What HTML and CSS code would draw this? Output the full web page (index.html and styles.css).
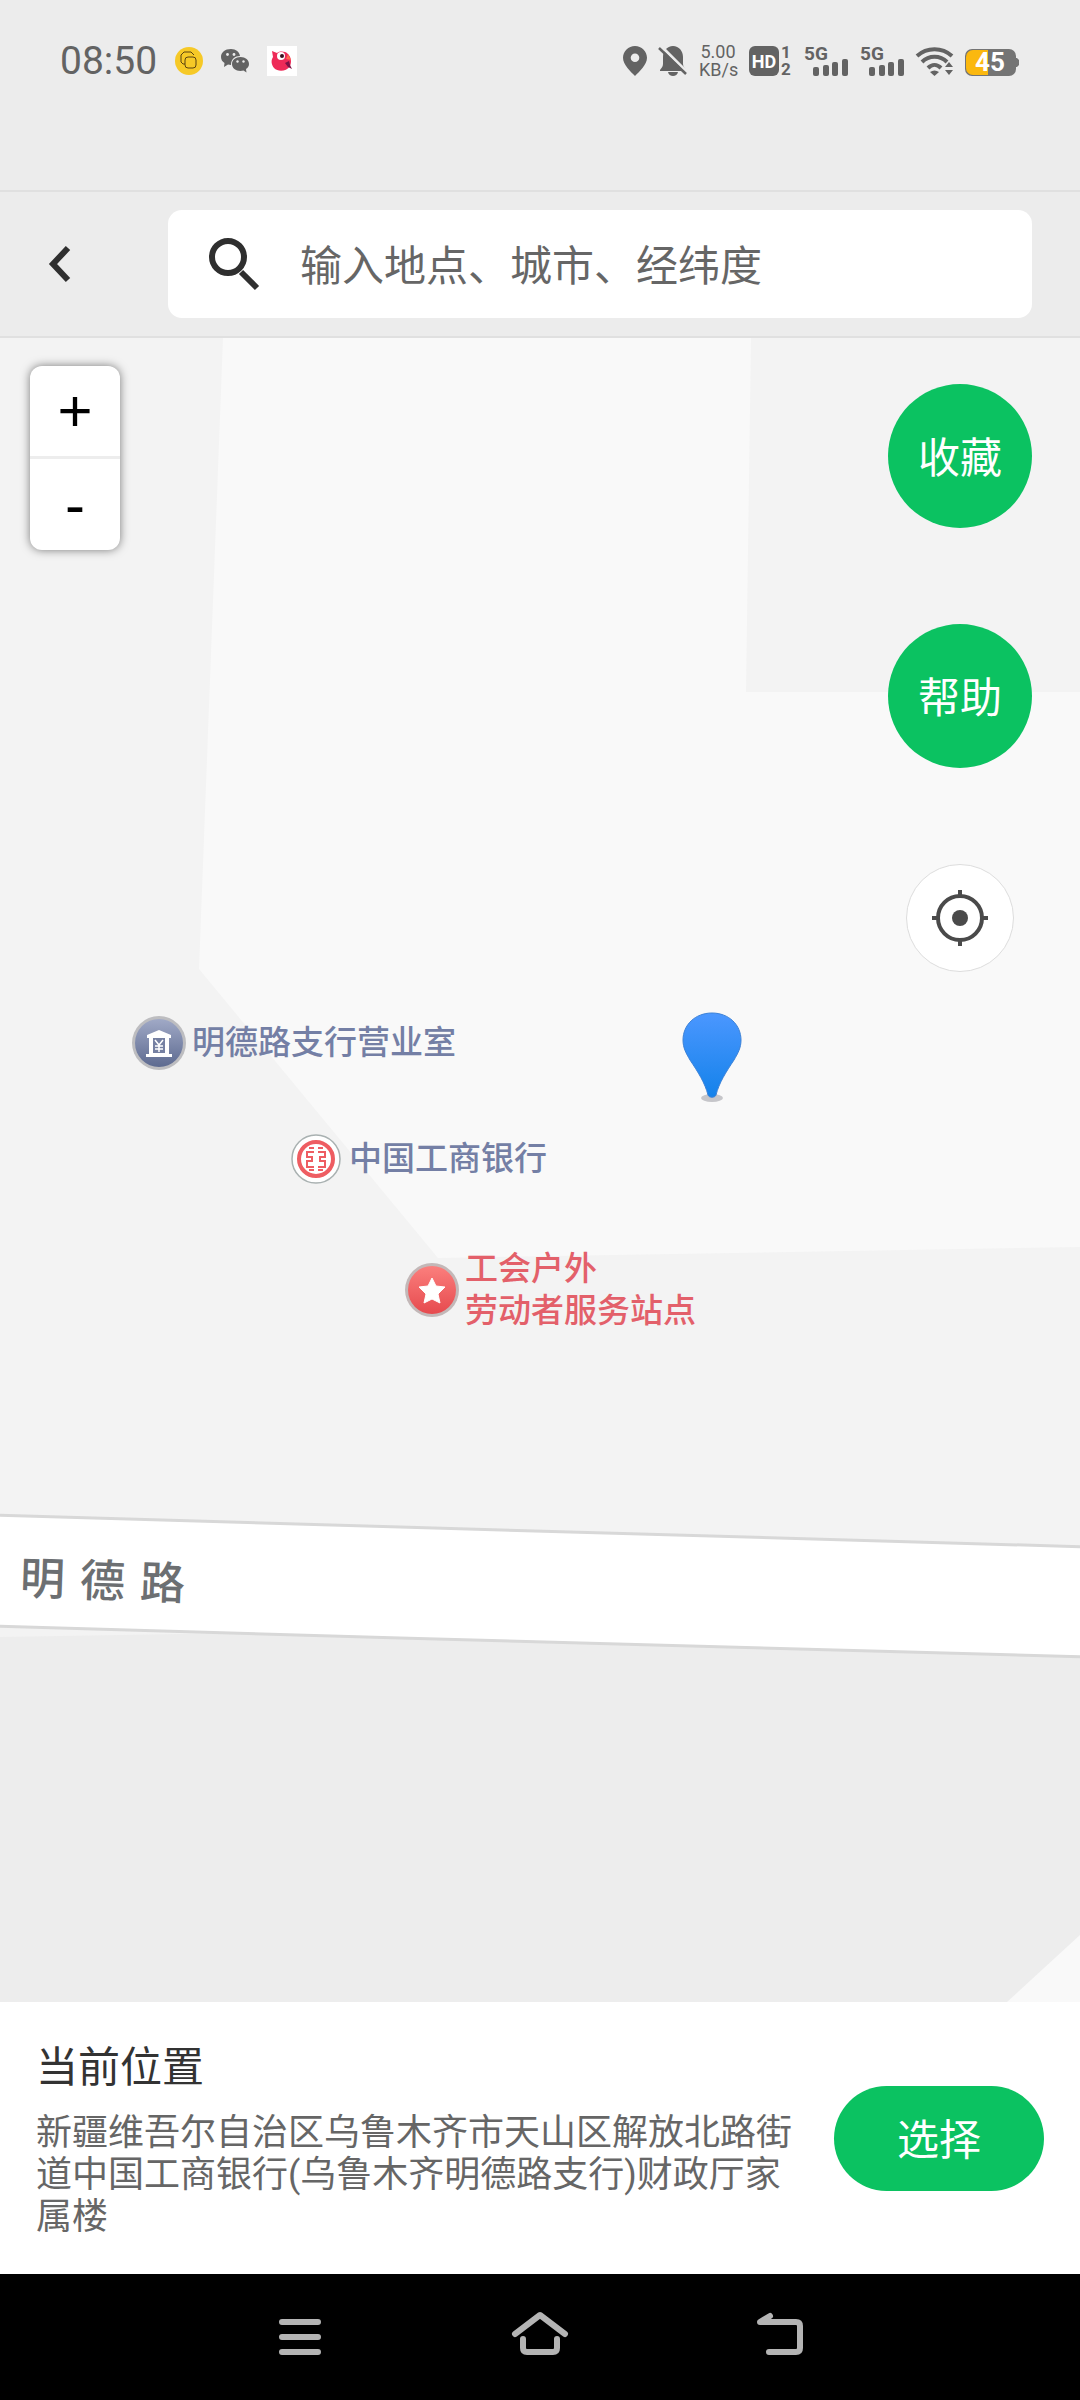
FILE: index.html
```html
<!DOCTYPE html>
<html lang="zh-CN">
<head>
    <meta charset="UTF-8">
    <meta name="viewport" content="width=device-width, initial-scale=1.0">
    <title>选择位置</title>
    <link rel="stylesheet" href="styles.css">
</head>
<body>
    <!-- Status bar -->
    <div class="status-bar">
        <div class="status-left">
            <span class="clock">08:50</span>
            <svg class="app-icon" width="28" height="30" viewBox="0 0 28 30">
                <circle cx="14" cy="15" r="14" fill="#f6c927"/>
                <g fill="none" stroke="#5a4210" stroke-width="1">
                    <path d="M10 18H8l-2-2V9l3-3h7l3 3"/>
                    <rect x="10" y="11" width="11" height="11" rx="3"/>
                </g>
            </svg>
            <svg class="app-icon" width="28" height="30" viewBox="0 0 28 30">
                <path d="M10 3C4 3 0 6.500 0 11c0 2.500 1.300 4.500 3.500 6L3 21l4-2.500c1 .3 2 .4 3 .4C10 13 14 10 19 10 18.500 6 15 3 10 3z" fill="#636363"/>
                <path d="M19.500 11c-5 0-8.500 3.200-8.500 7s3.500 7 8.500 7c1 0 2-.2 3-.5l3 2-.5-3.500c2-1.300 3-3 3-5 0-3.800-3.500-7-8.500-7z" fill="#636363"/>
                <g fill="#ececec">
                    <circle cx="6.500" cy="8.500" r="1.400"/><circle cx="13" cy="8.500" r="1.400"/>
                    <circle cx="16.500" cy="15.500" r="1.200"/><circle cx="22.500" cy="15.500" r="1.200"/>
                </g>
            </svg>
            <svg class="app-icon" width="30" height="30" viewBox="0 0 30 30">
                <rect width="30" height="30" fill="#fff"/>
                <path d="M5 5l5 2c3-2 8-2 11 1 3 3 4 8 2 12-4 6-12 6-16 2-3-4-3-8-1-11z" fill="#ee2a58"/>
                <path d="M18 17l4-2 1 4 2 4-4-2z" fill="#7c1246"/>
                <path d="M19 13l2-5 3 6z" fill="#ff6a4d"/>
                <circle cx="14" cy="10" r="4" fill="#fff"/>
                <circle cx="15" cy="10" r="2" fill="#3a1020"/>
            </svg>
        </div>
        <div class="status-right">
            <svg width="24" height="30" viewBox="0 0 24 30">
                <path fill-rule="evenodd" d="M12 0C5.400 0 0 5.200 0 11.800 0 19 8 26 12 30c4-4 12-11 12-18.200C24 5.200 18.600 0 12 0zm0 7.500a4.300 4.300 0 1 1 0 8.600 4.300 4.300 0 0 1 0-8.600z" fill="#636363"/>
            </svg>
            <svg width="28" height="30" viewBox="0 0 28 30">
                <path d="M14 0c-6 0-10 5-10 11v7c0 3-2 4-3 6v1h26v-1c-1-2-3-3-3-6v-7C24 5 20 0 14 0z" fill="#636363"/>
                <path d="M9 26h10c-.5 2.500-2.500 4-5 4s-4.500-1.500-5-4z" fill="#636363"/>
                <path d="M2 0l26 26" stroke="#ececec" stroke-width="3"/>
                <path d="M0 2l27 26" stroke="#636363" stroke-width="2.500"/>
            </svg>
            <span class="speed">5.00<br>KB/s</span>
            <svg width="43" height="30" viewBox="0 0 43 30">
                <rect width="30" height="30" rx="6" fill="#636363"/>
                <text class="svg-bold" x="15" y="22" font-size="18" text-anchor="middle" fill="#fff">HD</text>
                <text class="svg-bold" x="37" y="12" font-size="17" text-anchor="middle" fill="#636363">1</text>
                <text class="svg-bold" x="37" y="29" font-size="17" text-anchor="middle" fill="#636363">2</text>
            </svg>
            <svg width="44" height="30" viewBox="0 0 44 30">
                <text class="svg-bold" x="0" y="14" font-size="19" fill="#636363">5G</text>
                <g fill="#636363">
                    <rect x="9" y="21" width="6" height="9" rx="2"/><rect x="19" y="19" width="6" height="11" rx="2"/>
                    <rect x="28" y="16" width="6" height="14" rx="2"/><rect x="38" y="13" width="6" height="17" rx="2"/>
                </g>
            </svg>
            <svg width="44" height="30" viewBox="0 0 44 30">
                <text class="svg-bold" x="0" y="14" font-size="19" fill="#636363">5G</text>
                <g fill="#636363">
                    <rect x="9" y="21" width="6" height="9" rx="2"/><rect x="19" y="19" width="6" height="11" rx="2"/>
                    <rect x="28" y="16" width="6" height="14" rx="2"/><rect x="38" y="13" width="6" height="17" rx="2"/>
                </g>
            </svg>
            <svg width="37" height="30" viewBox="0 0 37 30">
                <g fill="none" stroke="#636363" stroke-width="4">
                    <path d="M1 10c10-9 25-9 35 0"/>
                    <path d="M6 16c7-7 18-7 25 0"/>
                    <path d="M12 22c4-4 9-4 13 0"/>
                </g>
                <path d="M14 26c3-2 6-2 9 0l-4.500 4z" fill="#636363"/>
                <path d="M33 16l4 5h-8zM33 29l4-5h-8z" fill="#636363"/>
            </svg>
            <svg width="54" height="30" viewBox="0 0 54 30">
                <path d="M50 12h2l2 2v5l-2 2h-2z" fill="#747474"/>
                <rect x="0" y="3" width="51" height="27" rx="7" fill="#747474"/>
                <path d="M23 4H8a7 7 0 0 0-7 7v11a7 7 0 0 0 7 7h15z" fill="#fbb80f"/>
                <text class="svg-bold" x="25" y="25" font-size="26" text-anchor="middle" fill="#fff">45</text>
            </svg>
        </div>
    </div>

    <!-- Search bar -->
    <header class="toolbar">
        <button class="back-btn" aria-label="返回">
            <svg width="24" height="40" viewBox="0 0 24 40">
                <path d="M20 4L5 20l15 16" fill="none" stroke="#2f2f2f" stroke-width="6"/>
            </svg>
        </button>
        <form class="search-box">
            <label for="keyword" aria-label="搜索">
                <svg width="54" height="56" viewBox="0 0 54 56">
                    <circle cx="21" cy="21" r="16" fill="none" stroke="#2f2f2f" stroke-width="6"/>
                    <path d="M34 36l16 16" stroke="#2f2f2f" stroke-width="6"/>
                </svg>
            </label>
            <input type="text" id="keyword" placeholder="输入地点、城市、经纬度">
        </form>
    </header>

    <!-- Map -->
    <main class="map">
        <svg class="map-tiles" viewBox="0 0 1080 1664" preserveAspectRatio="xMidYMid slice">
            <rect width="1080" height="1664" fill="#f3f3f3"/>
            <path d="M223 0H751L746 354H1080V909L438 920 199 631z" fill="#f9f9f9"/>
            <path d="M0 1299L300 1294H1080V1664H0z" fill="#ededed"/>
            <path d="M1007 1664L1080 1597V1664z" fill="#f9f9f9"/>
            <path d="M-10 1177L400 1189 1090 1209V1319L400 1300-10 1288z" fill="#fff" stroke="#d8d8d8" stroke-width="3"/>
        </svg>

        <div class="road-name"><span>明</span><span>德</span><span>路</span></div>

        <div class="poi poi-office">
            <svg width="54" height="54" viewBox="0 0 54 54">
                <defs>
                    <linearGradient id="slate" x1="0" y1="0" x2="0" y2="1">
                        <stop offset="0" stop-color="#a0a9c6"/><stop offset="1" stop-color="#5d6a90"/>
                    </linearGradient>
                </defs>
                <circle cx="27" cy="27" r="27" fill="#bdbdc0"/>
                <circle cx="27" cy="27" r="24" fill="url(#slate)"/>
                <path d="M27 14l12 5v3h-2v16h3v3H14v-3h3V22h-2v-3z" fill="#fff"/>
                <rect x="21" y="22" width="12" height="15" fill="#7580a2"/>
                <path d="M23 24l4 5 4-5M27 29v7M23 30h8M23 33h8" fill="none" stroke="#fff" stroke-width="1.500"/>
            </svg>
            <span>明德路支行营业室</span>
        </div>

        <div class="poi poi-bank">
            <svg width="54" height="54" viewBox="0 0 54 54">
                <circle cx="27" cy="27" r="24" fill="#fff" stroke="#a9b1b1" stroke-width="1.500"/>
                <circle cx="27" cy="27" r="17" fill="none" stroke="#ee5d62" stroke-width="4"/>
                <g fill="none" stroke="#ee5d62" stroke-width="2">
                    <path d="M25 16h-5M29 16h5M25 20h-7v5h5v4h-5v6h7M29 20h7v5h-5v4h5v6h-7M25 38h-5M29 38h5"/>
                </g>
            </svg>
            <span>中国工商银行</span>
        </div>

        <div class="poi poi-station">
            <svg width="54" height="54" viewBox="0 0 54 54">
                <defs>
                    <linearGradient id="coral" x1="0" y1="0" x2="0" y2="1">
                        <stop offset="0" stop-color="#fb7f7d"/><stop offset="1" stop-color="#e64a4e"/>
                    </linearGradient>
                </defs>
                <circle cx="27" cy="27" r="27" fill="#c3b8b8"/>
                <circle cx="27" cy="27" r="24" fill="url(#coral)"/>
                <path d="M27 15l4 8 9 1-7 7 2 9-8-4-8 4 2-9-7-7 9-1z" fill="#fff" stroke="#fff" stroke-linejoin="round"/>
            </svg>
            <span>工会户外<br>劳动者服务站点</span>
        </div>

        <svg class="marker" width="60" height="92" viewBox="0 0 60 92">
            <defs>
                <linearGradient id="blue" x1="0" y1="0" x2="0" y2="1">
                    <stop offset="0" stop-color="#4b97ff"/><stop offset="1" stop-color="#1482ea"/>
                </linearGradient>
            </defs>
            <ellipse cx="30" cy="86" rx="11" ry="4" fill="#c6c6ca"/>
            <path d="M30 1C13 1 1 13 1 28c0 8 3 13 7 20 8 12 15 23 18 35 1 3 7 3 8 0 3-12 10-23 18-35 4-7 7-12 7-20C59 13 47 1 30 1z" fill="url(#blue)" stroke="#3c82d8" stroke-width="1"/>
        </svg>

        <div class="zoom-control">
            <button aria-label="放大">+</button>
            <button aria-label="缩小">-</button>
        </div>

        <div class="map-actions">
            <button class="round-btn">收藏</button>
            <button class="round-btn">帮助</button>
            <button class="locate-btn" aria-label="定位">
                <svg width="56" height="56" viewBox="0 0 56 56">
                    <g fill="none" stroke="#4a4a4a" stroke-width="4">
                        <circle cx="28" cy="28" r="22"/>
                        <path d="M28 0v6M28 50v6M0 28h6M50 28h6"/>
                    </g>
                    <circle cx="28" cy="28" r="8" fill="#4a4a4a"/>
                </svg>
            </button>
        </div>
    </main>

    <!-- Current location -->
    <section class="location-panel">
        <div class="location-info">
            <h2>当前位置</h2>
            <p>新疆维吾尔自治区乌鲁木齐市天山区解放北路街道中国工商银行(乌鲁木齐明德路支行)财政厅家属楼</p>
        </div>
        <button class="select-btn">选择</button>
    </section>

    <!-- System navigation -->
    <nav class="nav-bar">
        <button aria-label="菜单">
            <svg width="60" height="50" viewBox="0 0 60 50">
                <path d="M12 10h36M12 25h36M12 40h36" stroke="#b4b4b4" stroke-width="6" stroke-linecap="round"/>
            </svg>
        </button>
        <button aria-label="主页">
            <svg width="60" height="50" viewBox="0 0 60 50">
                <path d="M5 22L30 3l25 19M13 27v9q0 4 4 4h26q4 0 4-4v-9" fill="none" stroke="#b4b4b4" stroke-width="6" stroke-linecap="round" stroke-linejoin="round"/>
            </svg>
        </button>
        <button aria-label="后退">
            <svg width="60" height="50" viewBox="0 0 60 50">
                <path d="M19 40h27q4 0 4-4V14q0-4-4-4H10l10-6" fill="none" stroke="#b4b4b4" stroke-width="6" stroke-linecap="round" stroke-linejoin="round"/>
            </svg>
        </button>
    </nav>
</body>
</html>
```

FILE: styles.css
```css
* {
    box-sizing: border-box;
}

body {
    font-family: Roboto, "Noto Sans CJK SC", sans-serif;
    background-color: #ececec;
    color: #333;
    margin: 0;
    display: flex;
    flex-direction: column;
    min-height: 100vh;
}

button {
    border: none;
    padding: 0;
    background: none;
    font-family: inherit;
    cursor: pointer;
}

svg {
    display: block;
    flex-shrink: 0;
    overflow: visible;
}

.svg-bold {
    font-family: Roboto, sans-serif;
    font-weight: bold;
}

/* Status bar */
.status-bar {
    display: flex;
    justify-content: space-between;
    align-items: flex-start;
    height: 190px;
    padding: 41px 61px 0 60px;
    color: #636363;
}

.status-left,
.status-right {
    display: flex;
    align-items: center;
    height: 40px;
}

.status-left {
    gap: 18px;
}

.status-right {
    gap: 12px;
}

.clock {
    font-size: 39px;
    line-height: 40px;
}

.speed {
    width: 38px;
    font-size: 18px;
    line-height: 18px;
    text-align: center;
    white-space: nowrap;
}

/* Search bar */
.toolbar {
    display: flex;
    align-items: center;
    padding: 18px 48px 18px 36px;
    border-top: 2px solid #e0e0e0;
    border-bottom: 2px solid #e0e0e0;
}

.back-btn {
    width: 132px;
    height: 108px;
    padding-left: 12px;
}

.search-box {
    flex: 1;
    display: flex;
    align-items: center;
    height: 108px;
    margin: 0;
    padding: 0 39px;
    gap: 39px;
    background-color: #fff;
    border-radius: 14px;
}

.search-box input {
    flex: 1;
    min-width: 0;
    border: none;
    outline: none;
    padding: 6px 0 0;
    background: none;
    font-family: inherit;
    font-size: 42px;
    line-height: 60px;
    color: #333;
}

.search-box input::placeholder {
    color: #666;
}

/* Map */
.map {
    position: relative;
    flex: 1;
    min-height: 1400px;
    overflow: hidden;
    background-color: #f3f3f3;
}

.map-tiles {
    position: absolute;
    width: 100%;
    height: 100%;
}

.road-name {
    position: absolute;
    left: 20px;
    top: 1212px;
    display: flex;
    gap: 15px;
    font-size: 45px;
    font-weight: 500;
    line-height: 64px;
    color: #6c6f72;
    transform: rotate(2deg);
}

.poi {
    position: absolute;
    display: flex;
    align-items: center;
    gap: 6px;
    font-size: 33px;
    font-weight: 500;
    line-height: 42px;
    white-space: nowrap;
    color: #747fa5;
}

.poi-office {
    left: 132px;
    top: 678px;
}

.poi-bank {
    left: 289px;
    top: 794px;
}

.poi-station {
    left: 405px;
    top: 910px;
    color: #e3606a;
}

.marker {
    position: absolute;
    left: 682px;
    top: 674px;
}

.zoom-control {
    position: absolute;
    left: 30px;
    top: 28px;
    width: 90px;
    border-radius: 12px;
    background-color: #fff;
    box-shadow: 0 0 10px rgba(0, 0, 0, 0.5);
}

.zoom-control button {
    display: block;
    width: 100%;
    height: 91px;
    font-family: "Liberation Sans", Arial, sans-serif;
    font-size: 60px;
    line-height: 90px;
    color: #000;
}

.zoom-control button:first-child {
    height: 93px;
    border-bottom: 3px solid #ededed;
}

.map-actions {
    position: absolute;
    right: 48px;
    top: 46px;
    display: flex;
    flex-direction: column;
    align-items: center;
    gap: 96px;
}

.round-btn {
    width: 144px;
    height: 144px;
    padding-bottom: 4px;
    border-radius: 50%;
    background-color: #0bc261;
    font-size: 42px;
    color: #fff;
}

.locate-btn {
    display: flex;
    justify-content: center;
    align-items: center;
    width: 108px;
    height: 108px;
    border: 1px solid #ddd;
    border-radius: 50%;
    background-color: #fff;
}

/* Current location */
.location-panel {
    display: flex;
    align-items: center;
    justify-content: space-between;
    gap: 36px;
    padding: 36px;
    background-color: #fff;
}

.location-info h2 {
    margin: 0 0 14px;
    font-size: 42px;
    font-weight: normal;
    line-height: 60px;
}

.location-info p {
    margin: 0;
    font-size: 36px;
    line-height: 42px;
    color: #666;
}

.select-btn {
    flex-shrink: 0;
    width: 210px;
    height: 105px;
    padding-bottom: 4px;
    border-radius: 53px;
    background-color: #0bc261;
    font-size: 42px;
    color: #fff;
}

/* System navigation */
.nav-bar {
    display: flex;
    justify-content: center;
    align-items: center;
    gap: 180px;
    height: 126px;
    background-color: #000;
}
```
